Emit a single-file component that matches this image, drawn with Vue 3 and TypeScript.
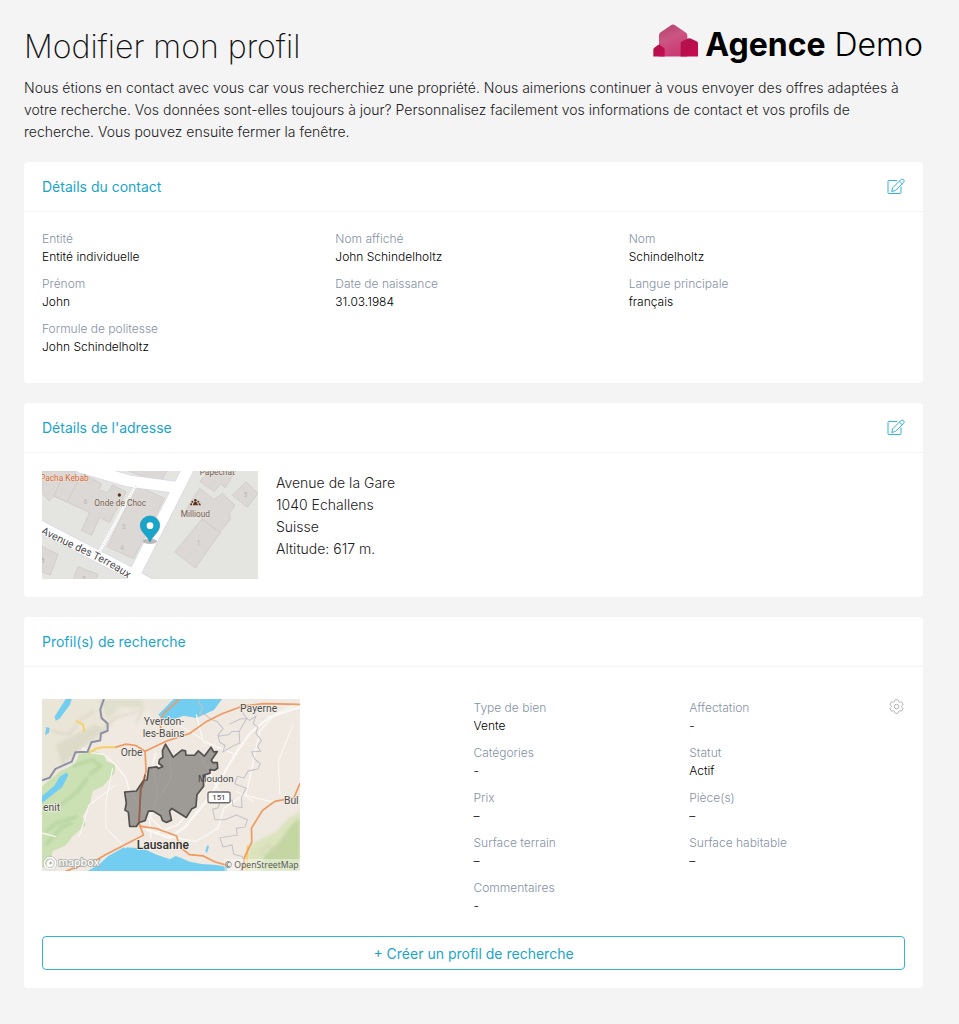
<script setup lang="ts">
interface Field {
  label: string
  value: string
}

const contactFields: Field[] = [
  { label: 'Entité', value: 'Entité individuelle' },
  { label: 'Nom affiché', value: 'John Schindelholtz' },
  { label: 'Nom', value: 'Schindelholtz' },
  { label: 'Prénom', value: 'John' },
  { label: 'Date de naissance', value: '31.03.1984' },
  { label: 'Langue principale', value: 'français' },
  { label: 'Formule de politesse', value: 'John Schindelholtz' },
]

const addressLines: string[] = ['Avenue de la Gare', '1040 Echallens', 'Suisse', 'Altitude: 617 m.']

const searchFields: Field[] = [
  { label: 'Type de bien', value: 'Vente' },
  { label: 'Affectation', value: '-' },
  { label: 'Catégories', value: '-' },
  { label: 'Statut', value: 'Actif' },
  { label: 'Prix', value: '–' },
  { label: 'Pièce(s)', value: '–' },
  { label: 'Surface terrain', value: '–' },
  { label: 'Surface habitable', value: '–' },
  { label: 'Commentaires', value: '-' },
]
</script>

<template>
  <main class="page">
    <header class="page-header">
      <h1>Modifier mon profil</h1>
      <div class="brand">
        <svg class="brand-mark" viewBox="0 0 135 98" aria-hidden="true">
          <defs>
            <linearGradient id="houseMain" x1="0" y1="0" x2="0.4" y2="1">
              <stop offset="0" stop-color="#b04468" />
              <stop offset="0.5" stop-color="#cb5583" />
              <stop offset="1" stop-color="#cc3a74" />
            </linearGradient>
            <linearGradient id="houseSide" x1="0" y1="0" x2="1" y2="1">
              <stop offset="0" stop-color="#b01549" />
              <stop offset="0.5" stop-color="#b80f4c" />
              <stop offset="1" stop-color="#cf0a56" />
            </linearGradient>
          </defs>
          <path d="M18 97V33q0-5 4-8L54 3q6-4 12 0l32 22q5 3 5 8v64z" fill="url(#houseMain)" />
          <path d="M1 97V76q0-3 3-5l12-9q2-1 4 0l12 9q3 2 3 5v21z" fill="url(#houseSide)" />
          <path d="M83 97V58q0-4 3-6l19-9q4-2 8 0l19 9q3 2 3 6v39z" fill="url(#houseSide)" />
        </svg>
        <span class="brand-name"><strong>Agence</strong> Demo</span>
      </div>
    </header>

    <p class="intro">
      Nous étions en contact avec vous car vous recherchiez une propriété. Nous aimerions continuer à vous
      envoyer des offres adaptées à votre recherche. Vos données sont-elles toujours à jour? Personnalisez
      facilement vos informations de contact et vos profils de recherche. Vous pouvez ensuite fermer la fenêtre.
    </p>

    <section class="card">
      <div class="card-header">
        <h2>Détails du contact</h2>
        <button class="icon-button" type="button" aria-label="Modifier les détails du contact">
          <svg class="edit-icon" viewBox="0 0 54 50" aria-hidden="true">
            <path d="M31 7H5Q3 7 3 9V44Q3 46 5 46H40Q42 46 42 44V25" />
            <path d="M14 40L17 29L41 5Q44 1 49 4Q54 8 50 13L25 37ZM37 9L46 17" />
          </svg>
        </button>
      </div>
      <dl class="fields contact-fields">
        <div v-for="field in contactFields" :key="field.label" class="field">
          <dt>{{ field.label }}</dt>
          <dd>{{ field.value }}</dd>
        </div>
      </dl>
    </section>

    <section class="card">
      <div class="card-header">
        <h2>Détails de l'adresse</h2>
        <button class="icon-button" type="button" aria-label="Modifier les détails de l'adresse">
          <svg class="edit-icon" viewBox="0 0 54 50" aria-hidden="true">
            <path d="M31 7H5Q3 7 3 9V44Q3 46 5 46H40Q42 46 42 44V25" />
            <path d="M14 40L17 29L41 5Q44 1 49 4Q54 8 50 13L25 37ZM37 9L46 17" />
          </svg>
        </button>
      </div>
      <div class="address">
        <svg class="address-map" viewBox="39 33 648 324" role="img" aria-label="Plan de l'adresse">
          <rect x="39" y="33" width="648" height="324" fill="#e4e4e0" />
          <g fill="#dcd8d5" stroke="#cbc6c3" stroke-width="2">
            <path d="M39 33H140L114 126L75 108L60 122L39 100Z" />
            <path d="M75 108L96 60L158 68L114 126Z" />
            <path d="M159 40L204 64L218 72L210 90L236 98L251 75L292 96L241 188L212 172L188 226L157 211L182 158L114 126Z" />
            <path d="M322 76L406 115L313 296L235 260Z" />
            <path d="M265 20H420L398 60L360 56Z" />
            <path d="M545 33L512 64L556 95L574 71L589 83L620 33Z" />
            <path d="M651 65L687 100L655 141L610 106Z" />
            <path d="M512 85L555 119L580 101L618 136L602 158L604 177L571 219L519 177L498 153L473 145Z" />
            <path d="M519 177L574 218L499 324L438 276Z" />
            <path d="M39 259L87 283L64 346L39 335Z" />
            <path d="M147 320L207 343L198 365H130Z" />
          </g>
          <g fill="none" stroke-linejoin="round">
            <path d="M150 20L300 63L455 84M478 25L309 357M20 192L309 342L390 390" stroke="#d7d7e6" stroke-width="38" />
            <path d="M150 20L300 63L455 84M478 25L309 357M20 192L309 342L390 390" stroke="#ffffff" stroke-width="34" />
            <path d="M320 77L211 276" stroke="#ffffff" stroke-width="8" />
            <path d="M320 77L211 276" stroke="#dddbe0" stroke-width="4" stroke-dasharray="3 5" />
          </g>
          <g class="map-label" font-size="19" fill="#bbb4b0">
            <text x="164" y="133">6</text>
            <text x="279" y="207">3</text>
            <text x="274" y="270">4</text>
            <text x="503" y="256">1</text>
            <text x="644" y="111">5</text>
            <text x="36" y="308">5</text>
            <text x="160" y="363">3</text>
          </g>
          <g class="map-label" font-size="25" stroke="#e9e6e2" stroke-width="3" paint-order="stroke">
            <text x="33" y="64" fill="#d7662f">Pacha Kebab</text>
            <text x="196" y="139" fill="#755b4b">Onde de Choc</text>
            <text x="455" y="170" fill="#755b4b">Millioud</text>
            <text x="512" y="46" fill="#755b4b">Papechat</text>
          </g>
          <circle cx="271" cy="105" r="5" fill="#5e3217" />
          <g fill="#5e3217">
            <circle cx="499" cy="121" r="4" />
            <circle cx="490" cy="125" r="3" />
            <circle cx="508" cy="125" r="3" />
            <path d="M483 136L485 130H489V136ZM491 136L495 126H503L507 136ZM509 136V130H513L516 136Z" />
          </g>
          <path id="streetLine" d="M35 219C105 258 225 302 303 360" fill="none" />
          <text class="map-label" font-size="32" fill="#4e4b4c" stroke="#ffffff" stroke-width="4" paint-order="stroke">
            <textPath href="#streetLine">Avenue des Terreaux</textPath>
          </text>
          <ellipse cx="363" cy="244" rx="21" ry="8" fill="#777777" opacity="0.5" />
          <path d="M363 246C354 225 334 216 334 196A29 28 0 0 1 392 196C392 216 372 225 363 246Z" fill="#19a5ca" stroke="#168eaf" stroke-width="2" />
          <circle cx="363" cy="197" r="10" fill="#ffffff" />
        </svg>
        <address>
          <span v-for="line in addressLines" :key="line">{{ line }}</span>
        </address>
      </div>
    </section>

    <section class="card">
      <div class="card-header">
        <h2>Profil(s) de recherche</h2>
      </div>
      <div class="search-body">
        <div class="search-profile">
          <svg class="region-map" viewBox="39 24 771 515" role="img" aria-label="Zone de recherche">
            <defs>
              <filter id="relief" x="-20%" y="-20%" width="140%" height="140%">
                <feGaussianBlur stdDeviation="5" />
              </filter>
            </defs>
            <rect x="39" y="24" width="771" height="515" fill="#efe9e1" />
            <g filter="url(#relief)">
              <path d="M39 24H390L350 60L285 55L230 120L205 155L155 175L120 210L90 245L39 270Z" fill="#e9e5d7" />
              <path d="M205 24H365L340 50L270 45L238 85Z" fill="#e0dfcd" />
              <path d="M80 160L200 100L225 120L150 175L100 225Z" fill="#dedaca" />
              <path d="M650 539L660 460L700 440L740 420L770 385L810 360V539Z" fill="#dbe3bd" />
              <path d="M690 539L705 490L750 450L785 400L810 380V539Z" fill="#c3d7a0" />
              <path d="M330 24H470L440 60L380 80Z" fill="#ebe6dc" />
            </g>
            <path d="M39 285L95 239L138 218L150 190L190 178L226 188L231 210L259 220L256 246L220 285L190 300L183 334L160 375L170 400L130 435L109 462L71 479L65 510L39 530Z" fill="#cbe1b4" />
            <g filter="url(#relief)" fill="none" stroke="#b2d09a" stroke-width="9" opacity="0.8">
              <path d="M130 225L190 205L215 225L180 250M50 420L83 394L145 375M50 460L100 405L130 395M95 340L145 300L175 260" />
            </g>
            <g filter="url(#relief)" fill="none" stroke="#d3cbbb" stroke-width="5" opacity="0.65">
              <path d="M70 120L120 130L150 90L195 60M215 120L260 80L330 60M690 490L715 460L740 490L770 430M755 530L785 475M320 95L340 55" />
            </g>
            <g fill="#73cdf0">
              <path d="M110 24H128L122 42L92 82L80 89L77 76Z" />
              <path d="M52 108L62 111L60 125L48 132Z" />
              <path d="M112 244L118 251L99 288L39 335V314L76 283L92 256Z" />
              <path d="M433 24H577L553 57L500 81L463 74L418 90L396 84L387 70Z" />
              <path d="M173 539L208 520L236 494L284 467L340 470L380 489L421 503L438 493L457 500L478 510L515 517L560 520L592 526V539Z" />
              <path d="M533 461L538 465L532 484L527 478Z" />
              <path d="M736 328L748 324L745 330ZM672 54L681 59L675 67Z" />
            </g>
            <g fill="none" stroke="#faf8f5" stroke-width="4">
              <path d="M183 184L222 189L258 220L290 260L300 300L335 345L365 380L420 435L500 450M500 450L565 410L583 350L650 305L690 120L735 70L810 35M380 185L370 220L385 310L360 380L365 440M420 180L425 260L390 320M510 190L560 285L590 330M175 184L160 170M470 370L445 400L380 423M39 425L80 435M500 70L520 150L620 190M640 310L720 330L810 320" />
              <path d="M810 48L720 78L661 126L619 185L540 317L468 405L420 439L350 414" stroke-width="7" />
              <path d="M250 230L230 330L230 410L290 470M260 280L180 340L150 435M430 90L520 145M750 310L745 210L790 100M673 330L620 300" stroke-width="3" />
            </g>
            <path d="M224 24L213 56L217 81L235 98L235 119L215 127L213 148L187 153L175 182L139 183L128 211L79 233L62 259L39 267" fill="none" stroke="#8d8fa4" stroke-width="6" />
            <path d="M510 24L508 38L520 50L510 68L527 71L544 85L562 91L580 112L565 132L570 153L586 163L580 182L610 164L630 155L628 121L606 121L598 130L565 135M628 121L651 82L635 60L646 47M599 99L632 84L651 82L660 88L678 75L670 98L684 108L678 126L695 148L683 165L692 180L665 182L675 204L691 217L685 233L655 239L643 260L623 255L615 277L649 291L635 318L637 349L610 344L607 326L572 330L565 349L549 354L556 385L585 385L620 371L653 385L645 407L620 410L622 431L571 439L580 466L607 460L612 488L638 495L648 520L628 539" fill="none" stroke="#c3c1c9" stroke-width="3" />
            <g fill="none" stroke="#f8cf60" stroke-width="6">
              <path d="M180 184L201 172L222 168H262" />
              <path d="M141 88L162 101L165 123" stroke-width="5" />
              <path d="M650 539L654 462" />
            </g>
            <g fill="none" stroke="#ee9a60" stroke-width="5">
              <path d="M450 24L403 67L391 91L395 120L408 133M258 168L290 159L320 163L347 180L410 150L480 127L531 91L577 68L639 45L700 38L810 40" />
              <path d="M347 180L350 240L334 294L329 394L342 431L285 460L230 489L202 505L130 531L110 539" />
              <path d="M329 404L381 411L441 433L451 466L480 489L520 493L557 511L595 522" />
              <path d="M810 276L792 319L735 330L698 357L665 410L666 451L645 495L637 539" />
            </g>
            <path d="M408 159L431 198L457 177L468 179L469 192H495L506 179L524 195L544 168L552 182L563 181L545 207L549 214H563L564 231L555 237L541 235V246L521 252L522 285L502 310L499 346L486 353L470 378L427 351L420 359L426 386L411 393L399 387L394 373L371 359H357L347 388L329 393L321 405H301L297 362L287 356L291 335L286 302L321 299L343 267L353 266L358 230L382 227L387 232L400 226L388 216L390 205L400 198L399 178Z" fill="#777573" fill-opacity="0.68" stroke="#51504f" stroke-width="5" stroke-linejoin="round" />
            <path d="M347 250L344 270L334 294L329 390" fill="none" stroke="#925f48" stroke-width="5" />
            <g class="map-label" font-size="31" fill="#4c4c4c" stroke="#f5f1e9" stroke-width="4" paint-order="stroke">
              <text x="343" y="103">Yverdon-</text>
              <text x="340" y="139">les-Bains</text>
              <text x="631" y="63">Payerne</text>
              <text x="274" y="195">Orbe</text>
              <text x="42" y="358">enit</text>
              <text x="762" y="339">Bul</text>
            </g>
            <text class="map-label" x="505" y="271" font-size="29" fill="#4a4a4a">Moudon</text>
            <text class="map-label city" x="322" y="473" font-size="36" fill="#303030" stroke="#f5f1e9" stroke-width="5" paint-order="stroke">Lausanne</text>
            <rect x="535" y="302" width="66" height="32" rx="6" fill="#ffffff" stroke="#6c6c6c" stroke-width="4" />
            <text class="map-label city" x="548" y="326" font-size="23" fill="#545454">151</text>
            <circle cx="63" cy="515" r="17" fill="none" stroke="#aeb2ae" stroke-width="8" />
            <circle cx="63" cy="515" r="17" fill="none" stroke="#ffffff" stroke-width="5" />
            <path d="M54 524Q51 508 63 504Q73 504 73 515Q72 527 54 524Z" fill="#ffffff" />
            <path d="M65 508L67 512L71 514L67 516L65 520L63 516L59 514L63 512Z" fill="#a9ada7" />
            <text class="mapbox-name" x="88" y="524" font-size="32" fill="#ffffff" stroke="#a4aaa4" stroke-width="5" paint-order="stroke">mapbox</text>
            <rect x="584" y="502" width="226" height="37" fill="#ffffff" fill-opacity="0.4" />
            <text class="attribution" x="585" y="530" font-size="26" fill="#555555">© OpenStreetMap</text>
          </svg>
          <div class="search-details">
            <dl class="fields search-fields">
              <div v-for="field in searchFields" :key="field.label" class="field">
                <dt>{{ field.label }}</dt>
                <dd>{{ field.value }}</dd>
              </div>
            </dl>
            <button class="icon-button settings" type="button" aria-label="Paramètres du profil">
              <svg class="gear-icon" viewBox="2 2 20 20" aria-hidden="true">
                <path d="M9.594 3.94c.09-.542.56-.94 1.11-.94h2.593c.55 0 1.02.398 1.11.94l.213 1.281c.063.374.313.686.645.87.074.04.147.083.22.127.325.196.72.257 1.075.124l1.217-.456a1.125 1.125 0 0 1 1.37.49l1.296 2.247a1.125 1.125 0 0 1-.26 1.431l-1.003.827c-.293.241-.438.613-.43.992a7.723 7.723 0 0 1 0 .255c-.008.378.137.75.43.991l1.004.827c.424.35.534.955.26 1.43l-1.298 2.247a1.125 1.125 0 0 1-1.369.491l-1.217-.456c-.355-.133-.75-.072-1.076.124a6.47 6.47 0 0 1-.22.128c-.331.183-.581.495-.644.869l-.213 1.281c-.09.543-.56.94-1.11.94h-2.594c-.55 0-1.019-.398-1.11-.94l-.213-1.281c-.062-.374-.312-.686-.644-.87a6.52 6.52 0 0 1-.22-.127c-.325-.196-.72-.257-1.076-.124l-1.217.456a1.125 1.125 0 0 1-1.369-.49l-1.297-2.247a1.125 1.125 0 0 1 .26-1.431l1.004-.827c.292-.24.437-.613.43-.991a6.932 6.932 0 0 1 0-.255c.007-.38-.138-.751-.43-.992l-1.004-.827a1.125 1.125 0 0 1-.26-1.43l1.297-2.247a1.125 1.125 0 0 1 1.37-.491l1.216.456c.356.133.751.072 1.076-.124.072-.044.146-.086.22-.128.332-.183.582-.495.644-.869l.214-1.28Z" />
                <circle cx="12" cy="12" r="3" />
              </svg>
            </button>
          </div>
        </div>
        <button class="create-button" type="button">+ Créer un profil de recherche</button>
      </div>
    </section>
  </main>
</template>

<style>
body {
  margin: 0;
  background: #f4f4f4;
}
</style>

<style scoped>
.page {
  box-sizing: border-box;
  min-height: 100vh;
  padding: 24px 36px 16px 24px;
  background: #f4f4f4;
  color: #212121;
  font-family: Inter, "Liberation Sans", sans-serif;
  font-size: 14px;
  font-weight: 300;
}

.page-header {
  display: flex;
  align-items: flex-start;
  justify-content: space-between;
}

h1 {
  margin: 0;
  color: #111111;
  font-size: 32px;
  font-weight: 200;
  line-height: 46px;
}

.brand {
  display: flex;
  align-items: center;
  gap: 7px;
}

.brand-mark {
  width: 45px;
  height: 33px;
  margin-bottom: 9px;
}

.brand-name {
  color: #000000;
  font-size: 32px;
  line-height: 40px;
}

.brand-name strong {
  font-weight: 700;
}

.intro {
  margin: 7px 0 19px;
  padding-right: 8px;
  line-height: 22px;
}

.card {
  margin-bottom: 20px;
  border-radius: 4px;
  background: #ffffff;
}

.card-header {
  display: flex;
  align-items: center;
  justify-content: space-between;
  height: 49px;
  padding: 0 18px;
  border-bottom: 1px solid #f4f4f4;
}

h2 {
  margin: 0;
  color: #19a5ca;
  font-size: 14px;
  font-weight: 400;
  line-height: 22px;
}

.icon-button {
  display: flex;
  padding: 0;
  border: 0;
  background: none;
  cursor: pointer;
}

.edit-icon {
  width: 18px;
  height: 17px;
  fill: none;
  stroke: #35b3d3;
  stroke-width: 3;
  stroke-linejoin: round;
}

.fields {
  display: grid;
  margin: 0;
  font-size: 12px;
  line-height: 18px;
}

.contact-fields {
  grid-template-columns: repeat(3, 1fr);
  column-gap: 17px;
  padding: 18px;
}

.field {
  margin-bottom: 9px;
}

dt {
  color: #8492a6;
}

dd {
  margin: 0;
  color: #000000;
}

.address {
  display: flex;
  gap: 18px;
  padding: 18px;
}

.address-map {
  width: 216px;
  height: 108px;
}

.map-label {
  font-family: Roboto, sans-serif;
  font-weight: 400;
}

.map-label.city {
  font-weight: 500;
}

address {
  display: flex;
  flex-direction: column;
  padding-top: 1px;
  font-style: normal;
  line-height: 22px;
}

.search-body {
  padding: 32px 18px 18px;
}

.search-profile {
  display: grid;
  grid-template-columns: 1fr 1fr;
  align-items: start;
}

.region-map {
  width: 100%;
  max-width: 258px;
}

.mapbox-name {
  font-family: Inter, sans-serif;
  font-weight: 500;
}

.attribution {
  font-family: "Open Sans", sans-serif;
  font-weight: 400;
}

.search-details {
  position: relative;
}

.search-fields {
  grid-template-columns: 1fr 1fr;
}

.settings {
  position: absolute;
  top: 0;
  right: 1px;
}

.gear-icon {
  width: 15px;
  height: 15px;
  fill: none;
  stroke: #a9a9a9;
  stroke-width: 1.2;
}

.create-button {
  display: block;
  width: 100%;
  height: 34px;
  margin-top: 12px;
  border: 1px solid #35b3d3;
  border-radius: 4px;
  background: #ffffff;
  color: #19a5ca;
  font-family: inherit;
  font-size: 14px;
  font-weight: 400;
  cursor: pointer;
}
</style>
